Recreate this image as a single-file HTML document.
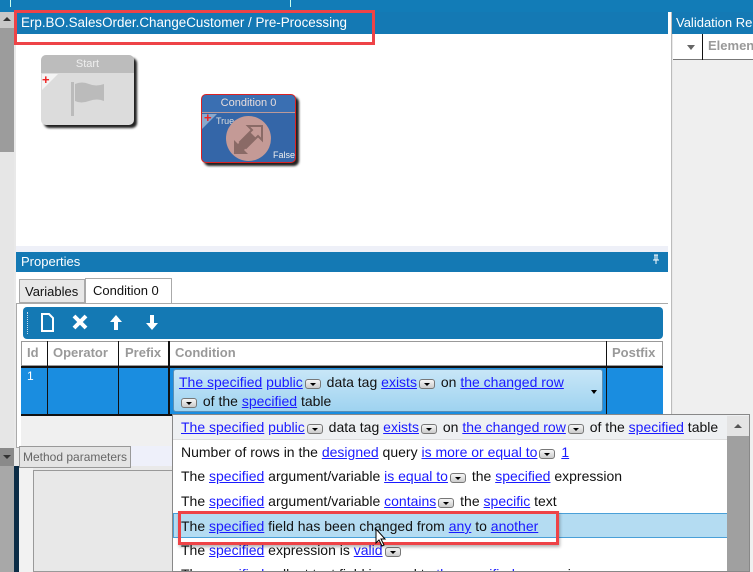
<!DOCTYPE html>
<html><head><meta charset="utf-8"><style>
*{box-sizing:border-box;margin:0;padding:0}
body{width:753px;height:572px;overflow:hidden;position:relative;background:#e9e9e9;font-family:"Segoe UI","Liberation Sans",sans-serif;font-size:13px;color:#111}
.a{position:absolute}
a,.l{color:#1a1aff;text-decoration:underline}
.dd{display:inline-block;width:16px;height:10px;border:1px solid #777;border-radius:3px;background:linear-gradient(#f6f6f6,#ccc);vertical-align:-2px;position:relative;margin:0 2px}
.dd:after{content:"";position:absolute;left:4px;top:3px;border-left:3px solid transparent;border-right:3px solid transparent;border-top:3px solid #000}
.it{height:24.5px;line-height:24px;padding-left:8px;white-space:nowrap;font-size:14px}
</style></head><body>
<div class="a" style="left:0;top:0;width:753px;height:12px;background:#127cb7"></div>
<div class="a" style="left:10px;top:0;width:1px;height:7px;background:#cfe"></div>
<div class="a" style="left:290px;top:0;width:1px;height:7px;background:#cfe"></div>
<div class="a" style="left:0;top:12px;width:14px;height:140px;background:#9c9c9c"></div>
<div class="a" style="left:0;top:12px;width:14px;height:16px;background:#c8c8c8"></div>
<div class="a" style="left:3px;top:17px;border-left:4px solid transparent;border-right:4px solid transparent;border-bottom:4px solid #333"></div>
<div class="a" style="left:0;top:152px;width:14px;height:296px;background:#e6e6e6"></div>
<div class="a" style="left:0;top:448px;width:14px;height:18px;background:#8a8a8a"></div>
<div class="a" style="left:3px;top:455px;border-left:4px solid transparent;border-right:4px solid transparent;border-top:4px solid #333"></div>
<div class="a" style="left:0;top:466px;width:14px;height:106px;background:#a8a8a8"></div>
<div class="a" style="left:14px;top:466px;width:5px;height:106px;background:#0b2c46"></div>
<div class="a" style="left:19px;top:466px;width:14px;height:106px;background:#f2f2f2"></div>
<div class="a" style="left:33px;top:470px;width:140px;height:102px;background:#e8e8e8;border:1px solid #999"></div>
<div class="a" style="left:16px;top:12px;width:652px;height:22px;background:#1479b4"></div>
<div class="a" style="left:21px;top:15px;color:#fff;font-size:13.4px">Erp.BO.SalesOrder.ChangeCustomer / Pre-Processing</div>
<div class="a" style="left:16px;top:34px;width:652px;height:212px;background:#fff"></div>
<div class="a" style="left:14px;top:10px;width:361px;height:35px;border:3px solid #ee4347"></div>
<div class="a" style="left:41px;top:55px;width:93px;height:70px;background:#dcdcdc;border-radius:5px;box-shadow:3px 3px 2px #222"></div>
<div class="a" style="left:41px;top:55px;width:93px;height:18px;background:#bcbcbc;border-radius:5px 5px 0 0;color:#eee;text-align:center;font-size:11px;line-height:18px">Start</div>
<div class="a" style="left:42px;top:74px;border-top:16px solid #f4f4f4;border-right:16px solid transparent"></div>
<div class="a" style="left:42px;top:72px;color:#e22;font-weight:bold;font-size:13px">+</div>
<div class="a" style="left:71px;top:82px;width:3px;height:34px;background:#bbb"></div>
<svg class="a" style="left:74px;top:81px" width="32" height="24"><path d="M1 3 Q8 0 15 3 T30 3 V20 Q23 17 15 20 T1 20Z" fill="#bbb"/></svg>
<div class="a" style="left:201px;top:94px;width:95px;height:69px;background:#3466a8;border:1px solid #d22;border-radius:5px;box-shadow:3px 3px 2px #222"></div>
<div class="a" style="left:202px;top:95px;width:93px;height:18px;background:#3a6fb2;border-bottom:1px solid #b99;border-radius:5px 5px 0 0;color:#e6dcdc;text-align:center;font-size:11px;line-height:17px">Condition 0</div>
<div class="a" style="left:202px;top:114px;border-top:15px solid #8aa8cc;border-right:15px solid transparent"></div>
<div class="a" style="left:204px;top:110px;color:#e22;font-weight:bold;font-size:13px">+</div>
<div class="a" style="left:216px;top:116px;color:#ddd;font-size:9px">True</div>
<div class="a" style="left:226px;top:116px;width:45px;height:45px;border-radius:50%;background:#c49a96"></div>
<svg class="a" style="left:228px;top:120px" width="40" height="40"><path d="M6 34 L6 20 L10 24 L22 12 L28 18 L16 30 L20 34Z" fill="#8a6a66"/><path d="M34 6 L34 20 L30 16 L18 28 L12 22 L24 10 L20 6Z" fill="none" stroke="#8a6a66" stroke-width="2"/></svg>
<div class="a" style="left:273px;top:150px;color:#eee;font-size:9px">False</div>
<div class="a" style="left:16px;top:246px;width:652px;height:6px;background:#eef0f8"></div>
<div class="a" style="left:16px;top:252px;width:652px;height:20px;background:#1479b4;color:#fff;line-height:20px;padding-left:5px">Properties</div>
<svg class="a" style="left:652px;top:254px" width="8" height="10"><path d="M2 1 H6 M3 1 V6 M5 1 V6 M1 6 H7 M4 6 V10" stroke="#fff" stroke-width="1"/></svg>
<div class="a" style="left:16px;top:272px;width:652px;height:176px;background:#fff"></div>
<div class="a" style="left:19px;top:279px;width:66px;height:24px;background:#e8e8e8;border:1px solid #aaa;line-height:24px;padding-left:5px">Variables</div>
<div class="a" style="left:85px;top:278px;width:87px;height:26px;background:#fff;border:1px solid #aaa;border-bottom:none;line-height:24px;padding-left:7px">Condition 0</div>
<div class="a" style="left:16px;top:303px;width:652px;height:145px;border:1px solid #aaa;border-right:none;background:#fff"></div>
<div class="a" style="left:23px;top:307px;width:640px;height:32px;background:#1479b4;border-radius:4px"></div>
<div class="a" style="left:27px;top:312px;width:1px;height:22px;border-left:1px dotted #cde"></div>
<svg class="a" style="left:40px;top:313px" width="120" height="20"><path d="M2 1 H9 L13 5 V18 H2Z" fill="none" stroke="#fff" stroke-width="2"/><path d="M34 3 L46 15 M46 3 L34 15" stroke="#fff" stroke-width="4"/><path d="M76 2 L82 9 H78 V17 H74 V9 H70Z" fill="#fff"/><path d="M112 17 L118 10 H114 V2 H110 V10 H106Z" fill="#fff"/></svg>
<div class="a" style="left:21px;top:341px;width:642px;height:25px;background:#fff;border:1px solid #999"></div>
<div class="a" style="left:21px;top:366px;width:642px;height:50px;background:#1a8de0;border-top:2px solid #111;border-bottom:2px solid #111"></div>
<div class="a" style="left:47px;top:341px;width:1px;height:75px;background:#111"></div>
<div class="a" style="left:118px;top:341px;width:1px;height:75px;background:#111"></div>
<div class="a" style="left:168px;top:341px;width:2px;height:75px;background:#111"></div>
<div class="a" style="left:606px;top:341px;width:1px;height:75px;background:#111"></div>
<div class="a" style="left:27px;top:345px;color:#999;font-weight:bold">Id</div>
<div class="a" style="left:53px;top:345px;color:#999;font-weight:bold">Operator</div>
<div class="a" style="left:125px;top:345px;color:#999;font-weight:bold">Prefix</div>
<div class="a" style="left:175px;top:345px;color:#999;font-weight:bold">Condition</div>
<div class="a" style="left:612px;top:345px;color:#999;font-weight:bold">Postfix</div>
<div class="a" style="left:27px;top:369px;color:#fff;font-size:12px">1</div>
<div class="a" style="left:173px;top:369px;width:430px;height:43px;background:linear-gradient(#c8e6f7,#9fd3f0);border:1px solid #5a8fb5;border-radius:3px;padding:3px 0 0 5px;line-height:19px;white-space:nowrap;font-size:14px"><span class="l">The specified</span> <span class="l">public</span><span class="dd"></span> data tag <span class="l">exists</span><span class="dd"></span> on <span class="l">the changed row</span><br><span class="dd"></span> of the <span class="l">specified</span> table</div>
<div class="a" style="left:591px;top:390px;border-left:3px solid transparent;border-right:3px solid transparent;border-top:4px solid #000"></div>
<div class="a" style="left:21px;top:416px;width:152px;height:30px;background:#f0f0f0"></div>
<div class="a" style="left:19px;top:446px;width:112px;height:22px;background:#e4e4e4;border:1px solid #999;color:#666;font-size:12px;line-height:20px;padding-left:3px">Method parameters</div>
<div class="a" style="left:131px;top:446px;width:42px;height:20px;background:#eef0fa"></div>
<div class="a" style="left:668px;top:12px;width:4px;height:560px;background:#fff;border-right:1px solid #bbb"></div>
<div class="a" style="left:672px;top:12px;width:81px;height:22px;background:#1479b4;color:#fff;line-height:22px;padding-left:4px;white-space:nowrap;overflow:hidden">Validation Re</div>
<div class="a" style="left:673px;top:34px;width:80px;height:26px;background:#fff;border-bottom:1px solid #777"></div>
<div class="a" style="left:687px;top:45px;border-left:4px solid transparent;border-right:4px solid transparent;border-top:5px solid #666"></div>
<div class="a" style="left:702px;top:34px;width:1px;height:26px;background:#111"></div>
<div class="a" style="left:708px;top:38px;color:#999;font-weight:bold;white-space:nowrap">Elemen</div>
<div class="a" style="left:673px;top:60px;width:80px;height:512px;background:#efefef"></div>
<div class="a" style="left:172px;top:414px;width:578px;height:158px;background:#fff;border:1px solid #888;overflow:hidden">
<div style="position:absolute;left:554px;top:1px;width:22px;height:160px;background:#a0a0a0"></div>
<div style="position:absolute;left:554px;top:1px;width:22px;height:20px;background:#e4e4e4"></div>
<div style="position:absolute;left:561px;top:9px;border-left:4px solid transparent;border-right:4px solid transparent;border-bottom:4px solid #555"></div>
<div class="it" style="background:#eef0f2;border-bottom:1px solid #ddd"><span class="l">The specified</span> <span class="l">public</span><span class="dd"></span> data tag <span class="l">exists</span><span class="dd"></span> on <span class="l">the changed row</span><span class="dd"></span> of the <span class="l">specified</span> table</div>
<div class="it">Number of rows in the <span class="l">designed</span> query <span class="l">is more or equal to</span><span class="dd"></span> <span class="l">1</span></div>
<div class="it">The <span class="l">specified</span> argument/variable <span class="l">is equal to</span><span class="dd"></span> the <span class="l">specified</span> expression</div>
<div class="it">The <span class="l">specified</span> argument/variable <span class="l">contains</span><span class="dd"></span> the <span class="l">specific</span> text</div>
<div class="it" style="background:#b4dcf2;border:1px solid #4aa0d8;width:555px;padding-left:7px">The <span class="l">specified</span> field has been changed from <span class="l">any</span> to <span class="l">another</span></div>
<div class="it">The <span class="l">specified</span> expression is <span class="l">valid</span><span class="dd"></span></div>
<div class="it">The <span class="l">specified</span> callout text field is equal to <span class="l">the specified</span> expression</div>
</div>
<div class="a" style="left:178px;top:511px;width:381px;height:34px;border:3px solid #ee4347;box-shadow:1px 2px 3px rgba(0,0,0,.3)"></div>
<svg class="a" style="left:375px;top:528px" width="14" height="20"><path d="M1 1 L1 15 L4 12 L7 18 L9 17 L6 11 L10 11Z" fill="#fff" stroke="#000" stroke-width="1"/></svg>
</body></html>
